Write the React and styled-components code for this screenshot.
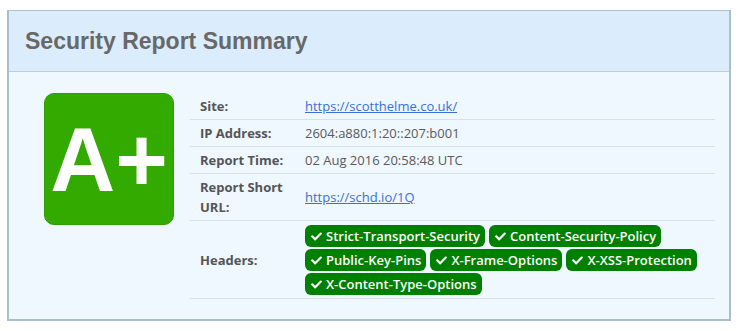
import React from "react";
import styled, { createGlobalStyle } from "styled-components";
import { FaCheck } from "react-icons/fa";

const Global = createGlobalStyle`
  body {
    margin: 0;
    background: #fff;
  }
`;

const Page = styled.div`
  padding: 10px 9px 9px 7px;
`;

const Panel = styled.div`
  border: 2px solid #a8c1c8;
  border-top-width: 1px;
  background: #eff7ff;
`;

const Header = styled.div`
  background: #dbecfd;
  border-bottom: 1px solid #b9d0d8;
  padding: 17px 16px 16px;
  font-family: "Liberation Sans", Arial, sans-serif;
  font-weight: bold;
  font-size: 23px;
  line-height: 27px;
  color: #686868;
`;

const Body = styled.div`
  display: flex;
  align-items: flex-start;
  gap: 16px;
  padding: 21px 14px 20px 35px;
`;

const Grade = styled.div`
  flex: none;
  width: 128px;
  height: 128px;
  border: 1px solid #2f9e00;
  border-radius: 10px;
  background: #33aa00;
  color: #fff;
  display: flex;
  align-items: center;
  justify-content: center;
  font-family: "Liberation Sans", Arial, sans-serif;
  font-weight: bold;
  font-size: 90px;
  line-height: 1;
  padding-top: 2px;
`;

const Table = styled.div`
  flex: 1;
  font-family: "Open Sans", "Noto Sans", sans-serif;
  font-size: 13px;
  line-height: 20px;
`;

const Row = styled.div`
  display: flex;
  align-items: center;
  padding: 3px 0;
  border-bottom: 1px solid #d9e0e6;
`;

const Label = styled.div`
  flex: none;
  width: 105px;
  padding-left: 10px;
  font-weight: 700;
  color: #555;
`;

const Value = styled.div`
  flex: 1;
  color: #5a5a5a;
`;

const Link = styled.a`
  color: #3a6fd8;
  text-decoration: underline;
`;

const Badges = styled.div`
  display: flex;
  flex-wrap: wrap;
  gap: 2px 4px;
  padding: 1px 0 0;
`;

const Badge = styled.span`
  display: inline-flex;
  align-items: center;
  gap: 4px;
  height: 22px;
  padding: 0 5px 0 6px;
  border-radius: 6px;
  background: #008000;
  color: #fff;
  font-weight: 600;
  font-size: 13px;
  svg {
    width: 11px;
    height: 11px;
  }
`;

const headers = [
  "Strict-Transport-Security",
  "Content-Security-Policy",
  "Public-Key-Pins",
  "X-Frame-Options",
  "X-XSS-Protection",
  "X-Content-Type-Options",
];

export default function App() {
  return (
    <Page>
      <Global />
      <Panel>
        <Header>Security Report Summary</Header>
        <Body>
          <Grade>A+</Grade>
          <Table>
            <Row>
              <Label>Site:</Label>
              <Value>
                <Link href="#">https://scotthelme.co.uk/</Link>
              </Value>
            </Row>
            <Row>
              <Label>IP Address:</Label>
              <Value>2604:a880:1:20::207:b001</Value>
            </Row>
            <Row>
              <Label>Report Time:</Label>
              <Value>02 Aug 2016 20:58:48 UTC</Value>
            </Row>
            <Row>
              <Label>Report Short URL:</Label>
              <Value>
                <Link href="#">https://schd.io/1Q</Link>
              </Value>
            </Row>
            <Row>
              <Label>Headers:</Label>
              <Value>
                <Badges>
                  {headers.map((h) => (
                    <Badge key={h}>
                      <FaCheck />
                      {h}
                    </Badge>
                  ))}
                </Badges>
              </Value>
            </Row>
          </Table>
        </Body>
      </Panel>
    </Page>
  );
}
